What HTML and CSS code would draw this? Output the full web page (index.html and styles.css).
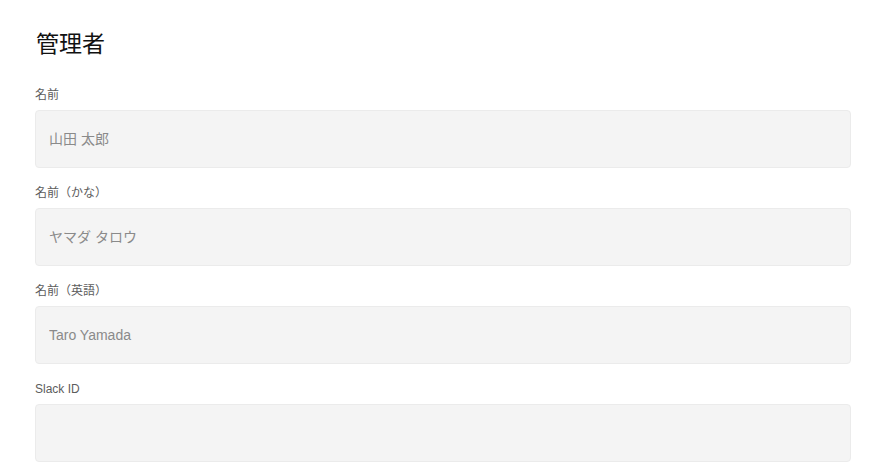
FILE: index.html
```html
<!DOCTYPE html>
<html lang="ja">
<head>
<meta charset="utf-8">
<link rel="stylesheet" href="styles.css">
</head>
<body>
<div class="page">
  <h1 class="title">管理者</h1>
  <div class="field">
    <label class="label">名前</label>
    <input class="input" type="text" placeholder="山田 太郎">
  </div>
  <div class="field">
    <label class="label">名前（かな）</label>
    <input class="input" type="text" placeholder="ヤマダ タロウ">
  </div>
  <div class="field">
    <label class="label">名前（英語）</label>
    <input class="input" type="text" placeholder="Taro Yamada">
  </div>
  <div class="field">
    <label class="label">Slack ID</label>
    <input class="input" type="text" placeholder="">
  </div>
</div>
</body>
</html>
```
FILE: styles.css
```css
html, body {
  margin: 0;
  padding: 0;
  background: #ffffff;
}
body {
  font-family: "Liberation Sans", "Noto Sans CJK JP", sans-serif;
  color: #333;
}
.page {
  padding: 28px 28px 0 35px;
}
.title {
  margin: 0 0 27px 1px;
  font-size: 23px;
  line-height: 32px;
  font-weight: normal;
  color: #111;
}
.field {
  margin-bottom: 17px;
}
.label {
  display: block;
  font-size: 12px;
  line-height: 16px;
  color: #5c5c5c;
  margin-bottom: 7px;
}
.input {
  display: block;
  box-sizing: border-box;
  width: 100%;
  height: 58px;
  margin: 0;
  padding: 0 13px;
  border: 1px solid #ebebeb;
  border-radius: 4px;
  background: #f4f4f4;
  font-family: "Liberation Sans", "Noto Sans CJK JP", sans-serif;
  font-size: 14px;
  color: #333;
  outline: none;
}
.input::placeholder {
  color: #8a8a8a;
  opacity: 1;
}
```
